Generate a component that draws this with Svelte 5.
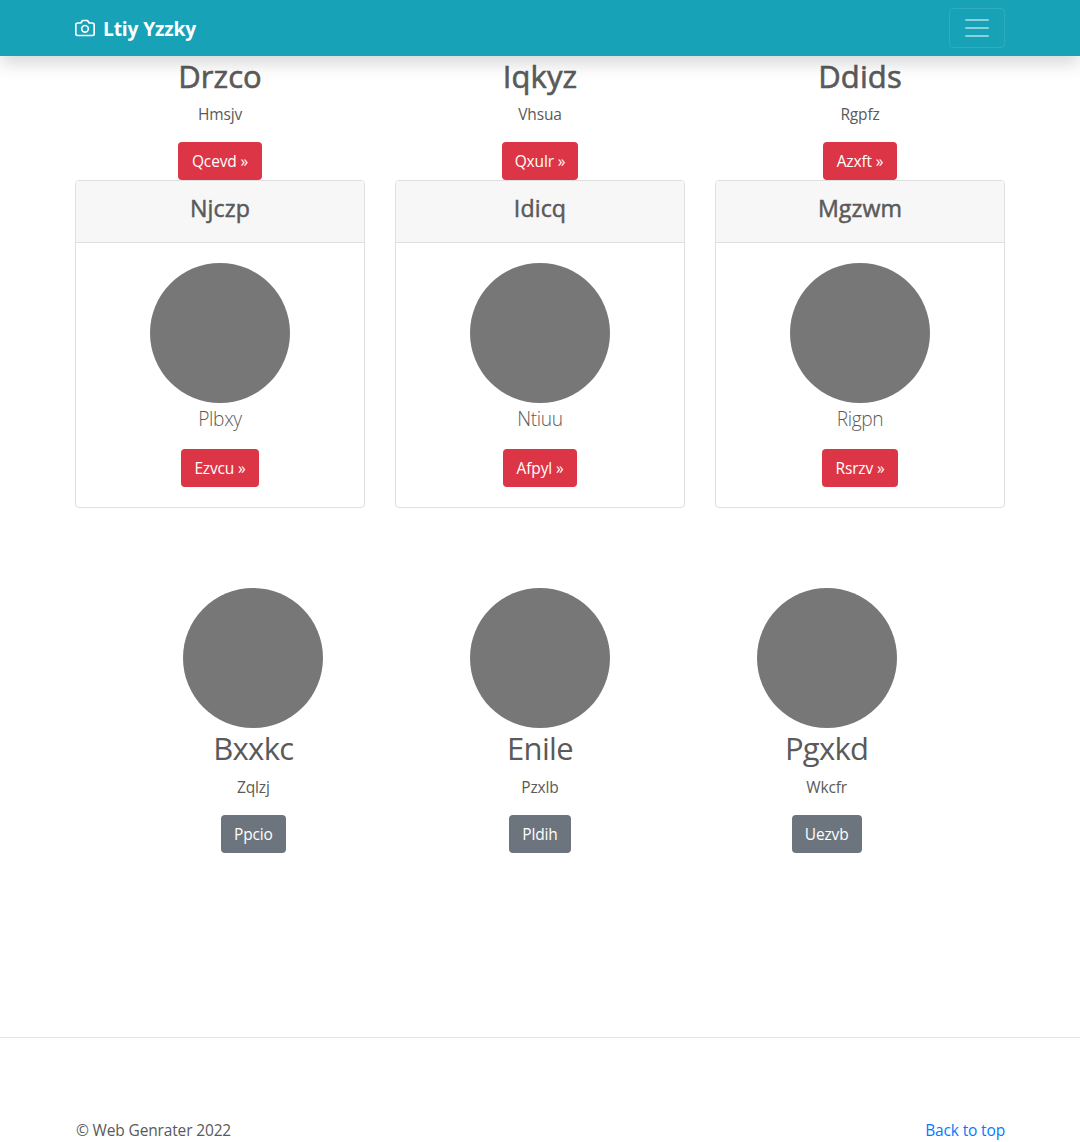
<script>
  const intro = [
    { title: 'Drzco', text: 'Hmsjv', action: 'Qcevd »', width: 84 },
    { title: 'Iqkyz', text: 'Vhsua', action: 'Qxulr »', width: 76 },
    { title: 'Ddids', text: 'Rgpfz', action: 'Azxft »', width: 74 }
  ];
  const cards = [
    { title: 'Njczp', text: 'Plbxy', action: 'Ezvcu »', width: 78 },
    { title: 'Idicq', text: 'Ntiuu', action: 'Afpyl »', width: 74 },
    { title: 'Mgzwm', text: 'Rigpn', action: 'Rsrzv »', width: 76 }
  ];
  const profiles = [
    { title: 'Bxxkc', text: 'Zqlzj', action: 'Ppcio', width: 65.6 },
    { title: 'Enile', text: 'Pzxlb', action: 'Pldih', width: 62 },
    { title: 'Pgxkd', text: 'Wkcfr', action: 'Uezvb', width: 70 }
  ];
</script>

<div class="page">
  <header class="navbar">
    <div class="container bar">
      <a class="brand" href="#top">
        <svg width="20" height="20" viewBox="0 0 24 24" fill="none" stroke="currentColor" stroke-width="2" stroke-linecap="round" stroke-linejoin="round" aria-hidden="true">
          <path d="M23 19a2 2 0 0 1-2 2H3a2 2 0 0 1-2-2V8a2 2 0 0 1 2-2h4l2-3h6l2 3h4a2 2 0 0 1 2 2z" />
          <circle cx="12" cy="13" r="4" />
        </svg>
        <strong>Ltiy Yzzky</strong>
      </a>
      <button class="toggler" aria-label="Toggle navigation">
        <svg width="30" height="30" viewBox="0 0 30 30" aria-hidden="true">
          <path stroke="rgba(255,255,255,.5)" stroke-linecap="round" stroke-miterlimit="10" stroke-width="2" d="M4 7h22M4 15h22M4 23h22" />
        </svg>
      </button>
    </div>
  </header>

  <main>
    <section class="container columns">
      {#each intro as item}
        <div class="column">
          <h2 class="medium">{item.title}</h2>
          <p>{item.text}</p>
          <a class="btn danger" href="#top" style:width="{item.width}px">{item.action}</a>
        </div>
      {/each}
    </section>

    <section class="container columns">
      {#each cards as item}
        <article class="card">
          <div class="card-header"><h4>{item.title}</h4></div>
          <div class="card-body">
            <div class="avatar"></div>
            <p class="lead">{item.text}</p>
            <a class="btn danger" href="#top" style:width="{item.width}px">{item.action}</a>
          </div>
        </article>
      {/each}
    </section>

    <section class="profiles">
      {#each profiles as item}
        <div class="column">
          <div class="avatar"></div>
          <h2>{item.title}</h2>
          <p>{item.text}</p>
          <a class="btn secondary" href="#top" style:width="{item.width}px">{item.action}</a>
        </div>
      {/each}
    </section>
  </main>

  <hr />

  <footer class="container">
    <span class="copy">© Web Genrater 2022</span>
    <a class="back" href="#top">Back to top</a>
  </footer>
</div>

<style>
  :global(body) {
    margin: 0;
    background: #fff;
  }
  .page,
  .page * {
    box-sizing: border-box;
  }
  .page {
    height: 1142px;
    overflow: hidden;
    font-family: 'Segoe UI', 'Open Sans', 'Noto Sans', sans-serif;
    font-size: 15.5px;
    line-height: 24px;
    letter-spacing: -0.15px;
    color: #5a5a5a;
  }
  a {
    text-decoration: none;
  }
  .container {
    width: 930px;
    margin: 0 auto;
  }
  .navbar {
    position: relative;
    height: 56px;
    background: #17a2b8;
    box-shadow: 0 8px 16px rgba(0, 0, 0, 0.15);
  }
  .bar {
    height: 100%;
    display: flex;
    align-items: center;
    justify-content: space-between;
  }
  .brand {
    display: flex;
    align-items: center;
    gap: 8px;
    color: #fff;
    font-size: 19.2px;
    letter-spacing: -0.15px;
    line-height: 30px;
  }
  .brand strong {
    font-weight: 700;
    padding-top: 1px;
  }
  .toggler {
    width: 56px;
    height: 40px;
    padding: 0;
    display: flex;
    align-items: center;
    justify-content: center;
    background: transparent;
    border: 1px solid rgba(255, 255, 255, 0.1);
    border-radius: 4px;
  }
  .columns {
    display: grid;
    grid-template-columns: repeat(3, 1fr);
    gap: 30px;
  }
  .column,
  .card-body {
    display: flex;
    flex-direction: column;
    align-items: center;
  }
  h2,
  h4,
  p {
    margin: 0;
  }
  h2 {
    padding-top: 1px;
    margin-bottom: 7px;
    font-size: 31px;
    font-weight: 400;
    line-height: 38.4px;
    letter-spacing: -0.7px;
  }
  h2.medium {
    letter-spacing: 0.1px;
    -webkit-text-stroke: 0.6px currentColor;
  }
  h4 {
    padding-top: 1px;
    margin-bottom: 7px;
    font-size: 23.2px;
    font-weight: 400;
    line-height: 28.8px;
    letter-spacing: 0.1px;
    -webkit-text-stroke: 0.5px currentColor;
  }
  p {
    margin-bottom: 16px;
  }
  .btn {
    height: 38px;
    display: flex;
    align-items: center;
    justify-content: center;
    border-radius: 4px;
    color: #fff;
    white-space: nowrap;
  }
  .danger {
    background: #dc3545;
  }
  .secondary {
    background: #6c757d;
  }
  .card {
    border: 1px solid #dfdfdf;
    border-radius: 4px;
    text-align: center;
  }
  .card-header {
    padding: 12px 20px;
    background: #f7f7f7;
    border-bottom: 1px solid #dfdfdf;
    border-radius: 3px 3px 0 0;
  }
  .card-body {
    padding: 20px;
  }
  .avatar {
    width: 140px;
    height: 140px;
    border-radius: 50%;
    background: #777;
  }
  .lead {
    padding-top: 1px;
    margin-bottom: 15px;
    font-size: 19.2px;
    font-weight: 300;
    line-height: 30px;
    letter-spacing: -0.35px;
  }
  .profiles {
    width: 860px;
    margin: 80px auto 0;
    display: grid;
    grid-template-columns: repeat(3, 1fr);
  }
  hr {
    height: 1px;
    margin: 184px 0 80px;
    border: 0;
    background: #e5e5e5;
  }
  footer {
    display: flex;
    justify-content: space-between;
  }
  .copy {
    padding-left: 1px;
  }
  .back {
    color: #007bff;
  }
</style>
